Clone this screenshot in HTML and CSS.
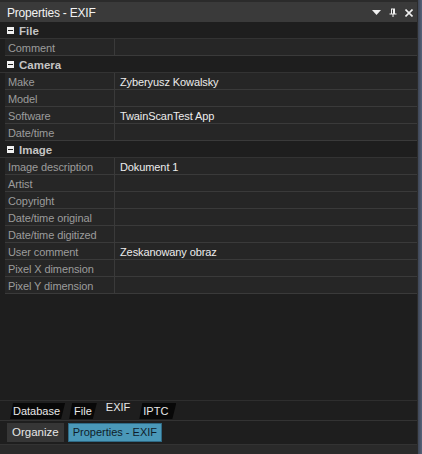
FILE: index.html
```html
<!DOCTYPE html>
<html>
<head>
<meta charset="utf-8">
<link rel="stylesheet" href="styles.css">
</head>
<body>
<div class="frame">
  <div class="panel">
    <div class="titlebar">
      <span class="title">Properties - EXIF</span>
      <span class="tools">
        <svg width="9" height="6" viewBox="0 0 9 6"><path d="M0 0H9L4.5 5Z" fill="#f0f0f0"/></svg>
        <svg width="8" height="9" viewBox="0 0 8 9"><path d="M2 0.5H6V5.5H7.5V6.5H4.5V9H3.5V6.5H0.5V5.5H2Z M3 1.5V5.5H4V1.5Z" fill="#f0f0f0" fill-rule="evenodd"/></svg>
        <svg width="8" height="8" viewBox="0 0 8 8"><path d="M0.5 0.5L7.5 7.5M7.5 0.5L0.5 7.5" stroke="#f0f0f0" stroke-width="1.6"/></svg>
      </span>
    </div>
    <div class="grid">
      <div class="cat"><span class="minus"></span>File</div>
      <div class="row"><span class="k">Comment</span><span class="v"></span></div>
      <div class="cat"><span class="minus"></span>Camera</div>
      <div class="row"><span class="k">Make</span><span class="v">Zyberyusz Kowalsky</span></div>
      <div class="row"><span class="k">Model</span><span class="v"></span></div>
      <div class="row"><span class="k">Software</span><span class="v">TwainScanTest App</span></div>
      <div class="row"><span class="k">Date/time</span><span class="v"></span></div>
      <div class="cat"><span class="minus"></span>Image</div>
      <div class="row"><span class="k">Image description</span><span class="v">Dokument 1</span></div>
      <div class="row"><span class="k">Artist</span><span class="v"></span></div>
      <div class="row"><span class="k">Copyright</span><span class="v"></span></div>
      <div class="row"><span class="k">Date/time original</span><span class="v"></span></div>
      <div class="row"><span class="k">Date/time digitized</span><span class="v"></span></div>
      <div class="row"><span class="k">User comment</span><span class="v">Zeskanowany obraz</span></div>
      <div class="row"><span class="k">Pixel X dimension</span><span class="v"></span></div>
      <div class="row"><span class="k">Pixel Y dimension</span><span class="v"></span></div>
    </div>
    <div class="filler"></div>
    <div class="tabs">
      <span class="tab">Database</span>
      <span class="tab">File</span>
      <span class="tab active">EXIF</span>
      <span class="tab">IPTC</span>
    </div>
    <div class="docbar">
      <span class="doc">Organize</span>
      <span class="doc sel">Properties - EXIF</span>
    </div>
    <div class="footer"></div>
  </div>
  <div class="edge"></div>
</div>
</body>
</html>
```
FILE: styles.css
```css
* { box-sizing: border-box; }
html, body { margin: 0; padding: 0; background: #1e1e1e; }
body { font-family: "Liberation Sans", Arial, sans-serif; font-size: 11px; }
.frame { display: flex; width: 422px; height: 454px; }
.panel { flex: 1; display: flex; flex-direction: column; background: #1e1e1e; border-right: 1px solid #2c2c2c; }
.edge { width: 4px; background: linear-gradient(90deg, #3e4655, #56627a); }
.titlebar { height: 22px; flex: none; display: flex; align-items: center; justify-content: space-between; background: #3a3a3a; border-top: 2px solid #2b2b2b; padding: 1px 4px 0 7px; color: #f2f2f2; }
.title { font-size: 12px; letter-spacing: -0.2px; }
.tools { display: flex; align-items: center; gap: 8px; }
.tools svg { display: block; }
.grid { display: flex; flex-direction: column; padding-left: 5px; }
.cat { height: 17px; display: flex; align-items: center; padding-top: 1px; font-weight: bold; color: #c4c4c4; font-size: 11.5px; border-bottom: 1px solid #333; margin-left: -5px; padding-left: 7px; background: #1e1e1e; }
.minus { width: 7px; height: 7px; background: #f0f0f0; margin-right: 5px; position: relative; }
.minus::after { content: ""; position: absolute; left: 1px; right: 1px; top: 3px; height: 1px; background: #1e1e1e; }
.row { height: 17px; display: grid; grid-template-columns: 110px 1fr; border-bottom: 1px solid #3a3a3a; background: #262626; }
.k { color: #9c9c9c; padding: 2px 0 0 3px; line-height: 14px; border-right: 1px solid #3a3a3a; white-space: nowrap; overflow: hidden; letter-spacing: -0.1px; }
.v { color: #ececec; padding: 2px 0 0 5px; line-height: 14px; white-space: nowrap; letter-spacing: -0.1px; }
.filler { flex: 1; }
.tabs { height: 21px; flex: none; display: flex; align-items: flex-end; gap: 4px; padding: 0 0 1px 10px; border-top: 1px solid #2e2e2e; border-bottom: 1px solid #333; color: #e8e8e8; }
.tab { height: 16px; line-height: 16px; padding: 0 5px 0 3px; background: #080808; clip-path: polygon(3px 0, 100% 0, calc(100% - 4px) 100%, 0 100%); }
.tab:nth-child(2) { padding-left: 5px; }
.tab:last-child { padding: 0 8px 0 4px; }
.tab.active { background: transparent; line-height: 14px; height: 19px; padding: 0 5px 4px 5px; }
.docbar { height: 23px; flex: none; display: flex; align-items: center; gap: 4px; padding: 0 0 0 7px; }
.doc { height: 19px; line-height: 19px; padding: 0 5px; background: #363636; color: #e6e6e6; font-size: 11.5px; }
.doc.sel { background: #4a98b8; color: #0f1d2a; border: 1px solid #2f6a85; line-height: 17px; padding: 0 4px; font-size: 11px; }
.footer { height: 10px; flex: none; background: #2a2a2a; border-top: 1px solid #333; }
```
